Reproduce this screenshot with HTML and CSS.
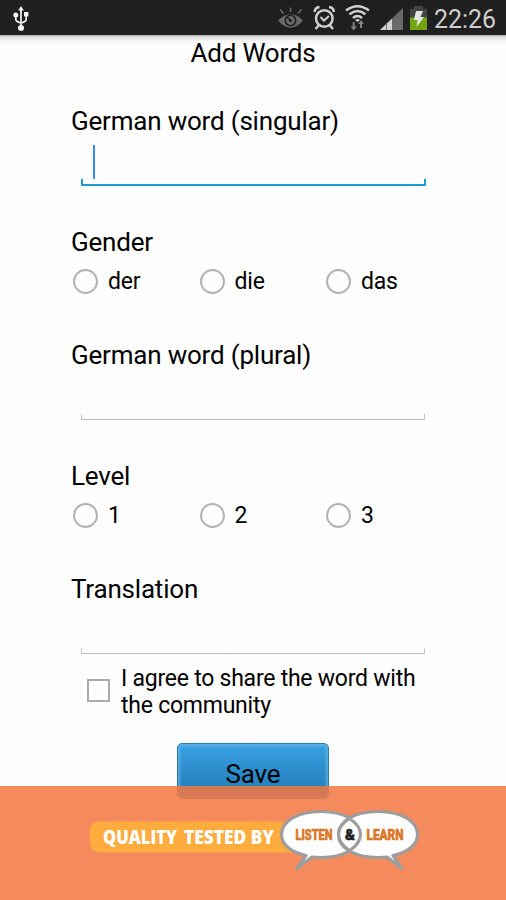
FILE: index.html
```
<!DOCTYPE html>
<html lang="en">
<head>
    <meta charset="UTF-8">
    <meta name="viewport" content="width=device-width, initial-scale=1.0">
    <title>Add Words</title>
    <link rel="stylesheet" href="styles.css">
</head>
<body>
    <header class="statusbar">
        <svg class="usb" width="18" height="28" viewBox="0 0 18 28">
            <g fill="none" stroke="#f4f4f4" stroke-width="1.7">
                <path d="M9 5v18M3.8 11v3.5q0 2 5.2 3.500M14.200 10v4.500q0 2-5.200 3.500"/>
            </g>
            <path d="M9 1l2.800 4.500H6.200z" fill="#f4f4f4"/>
            <circle cx="3.800" cy="10" r="2.500" fill="#f4f4f4"/>
            <rect x="12" y="7" width="4.400" height="4.400" fill="#f4f4f4"/>
            <circle cx="9" cy="23" r="3" fill="#f4f4f4"/>
        </svg>
        <div class="status-icons">
            <svg width="236" height="35" viewBox="270 0 236 35">
                <!-- smart stay eye -->
                <path d="M278 20.500q12.500-12.500 25 0q-12.500 14.500-25 0z" fill="#696969"/>
                <path d="M290.500 7.500v4.500M280 9.500l3.500 4M301.500 9.500l-3.500 4" stroke="#696969" stroke-width="1.600"/>
                <circle cx="290.500" cy="20.500" r="5.200" fill="none" stroke="#1f1f1f" stroke-width="1.600"/>
                <path d="M287 17l3.500 3.500" stroke="#1f1f1f" stroke-width="1.600"/>
                <circle cx="290.500" cy="20.500" r="1.500" fill="#1f1f1f"/>
                <!-- alarm -->
                <g fill="none" stroke="#d0d0d0">
                    <circle cx="324.300" cy="18.500" r="8.300" stroke-width="2.500"/>
                    <path d="M320.500 17l3.500 3.500 5-4.500" stroke-width="2"/>
                    <path d="M314.500 12q.5-4.500 5-5M334 12q-.5-4.500-5-5" stroke-width="2.500"/>
                    <path d="M318.500 25.500l-3 3.500M330 25.500l3 3.500" stroke-width="2.500"/>
                </g>
                <!-- wifi -->
                <g fill="none" stroke="#d0d0d0" stroke-width="2.500">
                    <path d="M346 10.500q11.500-8.500 23 0M349.500 14.300q8-6.500 16 0M353 18q4.500-4 9 0"/>
                </g>
                <path d="M355 20q2.500-2 5 0l-2.500 2z" fill="#d0d0d0"/>
                <g fill="#858585">
                    <path d="M352.700 22h2v4.500h2l-3 4-3-4h2z"/>
                    <path d="M360 28h2v-4h2l-3-4-3 4h2z"/>
                </g>
                <!-- signal -->
                <path d="M380 30l23-22v22z" fill="#696969"/>
                <path d="M380 30l12-11.500v11.500z" fill="#d0d0d0"/>
                <path d="M386.500 23v7" stroke="#777" stroke-width="1"/>
                <!-- battery -->
                <path d="M414 6h9v3h4v9h-17V9h4z" fill="#444"/>
                <path d="M410 17.500h17V30h-17z" fill="#73a410"/>
                <path d="M416 11h7l-2.500 6h3.500l-7.500 10 1-7h-3.500z" fill="#e4e4e4"/>
                <text class="clock" x="434" y="28" textLength="62" lengthAdjust="spacingAndGlyphs">22:26</text>
            </svg>
        </div>
    </header>

    <main class="page">
        <h1>Add Words</h1>
        <form class="word-form">
            <section class="entry">
                <label>German word (singular)</label>
                <div class="field active"><span class="caret"></span></div>
            </section>
            <section class="choice">
                <label>Gender</label>
                <div class="options">
                    <span class="option"><i class="radio"></i>der</span>
                    <span class="option"><i class="radio"></i>die</span>
                    <span class="option"><i class="radio"></i>das</span>
                </div>
            </section>
            <section class="entry">
                <label>German word (plural)</label>
                <div class="field"></div>
            </section>
            <section class="choice">
                <label>Level</label>
                <div class="options">
                    <span class="option"><i class="radio"></i>1</span>
                    <span class="option"><i class="radio"></i>2</span>
                    <span class="option"><i class="radio"></i>3</span>
                </div>
            </section>
            <section class="entry last">
                <label>Translation</label>
                <div class="field"></div>
            </section>
            <div class="agree">
                <i class="checkbox"></i>
                <span>I agree to share the word with<br>the community</span>
            </div>
            <button type="button" class="save">Save</button>
        </form>
    </main>

    <footer class="banner">
        <svg width="506" height="114" viewBox="0 786 506 114">
            <rect x="90" y="821.500" width="220" height="31" rx="9" fill="#ffac3e"/>
            <text class="quality" x="103" y="844" textLength="74" lengthAdjust="spacingAndGlyphs">QUALITY</text>
            <text class="quality" x="184" y="844" textLength="90" lengthAdjust="spacingAndGlyphs">TESTED BY</text>
            <g fill="#fff" stroke="#9d9d9d" stroke-width="3.200" stroke-linejoin="round">
                <path d="M306 855.500C290 852 281.500 844 281.500 834.500C281.500 821 298 811.500 321 811.500C344 811.500 360.500 821 360.500 834.500C360.500 848 344 857.500 321 857.500Q316 857.500 312 857L297 868.500Z"/>
                <path d="M393 855.500C409 852 417.500 844 417.500 834.500C417.500 821 401 811.500 378 811.500C355 811.500 338.500 821 338.500 834.500C338.500 848 355 857.500 378 857.500Q383 857.500 387 857L402 868.500Z"/>
                <path d="M349.500 818.500C364.200 828 364.200 841 349.500 850.500C334.800 841 334.800 828 349.500 818.500Z"/>
            </g>
            <text class="logo" x="295.500" y="840" textLength="37" lengthAdjust="spacingAndGlyphs">LISTEN</text>
            <text class="logo amp" x="345" y="840" textLength="10" lengthAdjust="spacingAndGlyphs">&amp;</text>
            <text class="logo" x="366.500" y="840" textLength="37" lengthAdjust="spacingAndGlyphs">LEARN</text>
        </svg>
    </footer>
</body>
</html>
```
FILE: styles.css
```
* {
    box-sizing: border-box;
}

body {
    font-family: Roboto, sans-serif;
    margin: 0;
    height: 900px;
    overflow: hidden;
    background-color: #fefefe;
    color: #000;
    display: flex;
    flex-direction: column;
}

.statusbar {
    height: 35px;
    flex: none;
    background-color: #1f1f1f;
    display: flex;
    justify-content: space-between;
    padding-left: 11.500px;
}

.status-icons {
    display: flex;
}

.usb {
    margin-top: 5px;
}

.clock {
    font-size: 26px;
    fill: #cfcfcf;
}

/* The form runs underneath the translucent banner */
.page {
    flex: 1;
    min-height: 0;
    background: linear-gradient(#b0b0b0 0, #dedede 2px, #f7f7f7 6px, #fefefe 12px);
}

h1 {
    margin: 0;
    font-size: 26px;
    font-weight: 400;
    line-height: 36px;
    letter-spacing: -0.2px;
    text-align: center;
}

.word-form {
    width: 366px;
    margin: 34px auto 0;
    display: flex;
    flex-direction: column;
}

.entry {
    height: 121px;
}

.entry.last {
    height: 92px;
}

.choice {
    height: 113px;
}

label {
    display: block;
    padding-left: 1px;
    font-size: 26px;
    line-height: 32px;
    letter-spacing: -0.2px;
}

/* Underlined text field with short ticks at both ends */
.field {
    height: 49px;
    margin: 0 11px;
    display: flex;
    align-items: flex-end;
    background:
        linear-gradient(#c4c4c4, #c4c4c4) left bottom / 1px 5px no-repeat,
        linear-gradient(#c4c4c4, #c4c4c4) right bottom / 1px 5px no-repeat;
    border-bottom: 1px solid #bbb;
}

.field.active {
    margin: 0 10px 0 10.500px;
    padding: 0 0 5px 12px;
    background:
        linear-gradient(#1b9bd0, #1b9bd0) left bottom / 2px 5px no-repeat,
        linear-gradient(#1b9bd0, #1b9bd0) right bottom / 2px 5px no-repeat;
    border-bottom: 2px solid #1b9bd0;
}

.caret {
    width: 2px;
    height: 34px;
    background-color: #3489f5;
}

.options {
    display: flex;
    margin-top: 7px;
    padding-left: 3px;
}

.option {
    flex: none;
    width: 126.500px;
    height: 32px;
    display: flex;
    align-items: center;
    gap: 10px;
    font-size: 23px;
    letter-spacing: -0.2px;
}

.radio {
    width: 25px;
    height: 25px;
    border: 2px solid #b2b2b2;
    border-radius: 50%;
}

.agree {
    display: flex;
    align-items: center;
    gap: 11px;
    padding-left: 17px;
    font-size: 23px;
    line-height: 27px;
    letter-spacing: -0.24px;
}

.checkbox {
    width: 23px;
    height: 23px;
    margin-bottom: 3px;
    border: 2px solid #aaa;
}

.save {
    width: 152px;
    height: 56px;
    margin-top: 24px;
    align-self: center;
    border: 1px solid #2580bc;
    border-radius: 5px;
    background: linear-gradient(#39a1e3, #2078b4);
    box-shadow: inset 0 0 3px 2px rgba(125, 190, 230, 0.6);
    font-family: inherit;
    font-size: 26px;
    letter-spacing: -0.2px;
    padding: 5px 0 0;
    color: #000;
}

.banner {
    position: relative;
    height: 114px;
    flex: none;
    background-color: rgba(243, 118, 65, 0.85);
}

.banner svg {
    display: block;
}

.quality {
    font-family: "Open Sans", sans-serif;
    font-size: 19px;
    font-weight: 800;
    fill: #fff;
}

.logo {
    font-size: 15px;
    font-weight: 900;
    fill: #d97828;
    stroke: #d97828;
    stroke-width: 0.6px;
}

.logo.amp {
    fill: #222;
    stroke: #222;
}
```
